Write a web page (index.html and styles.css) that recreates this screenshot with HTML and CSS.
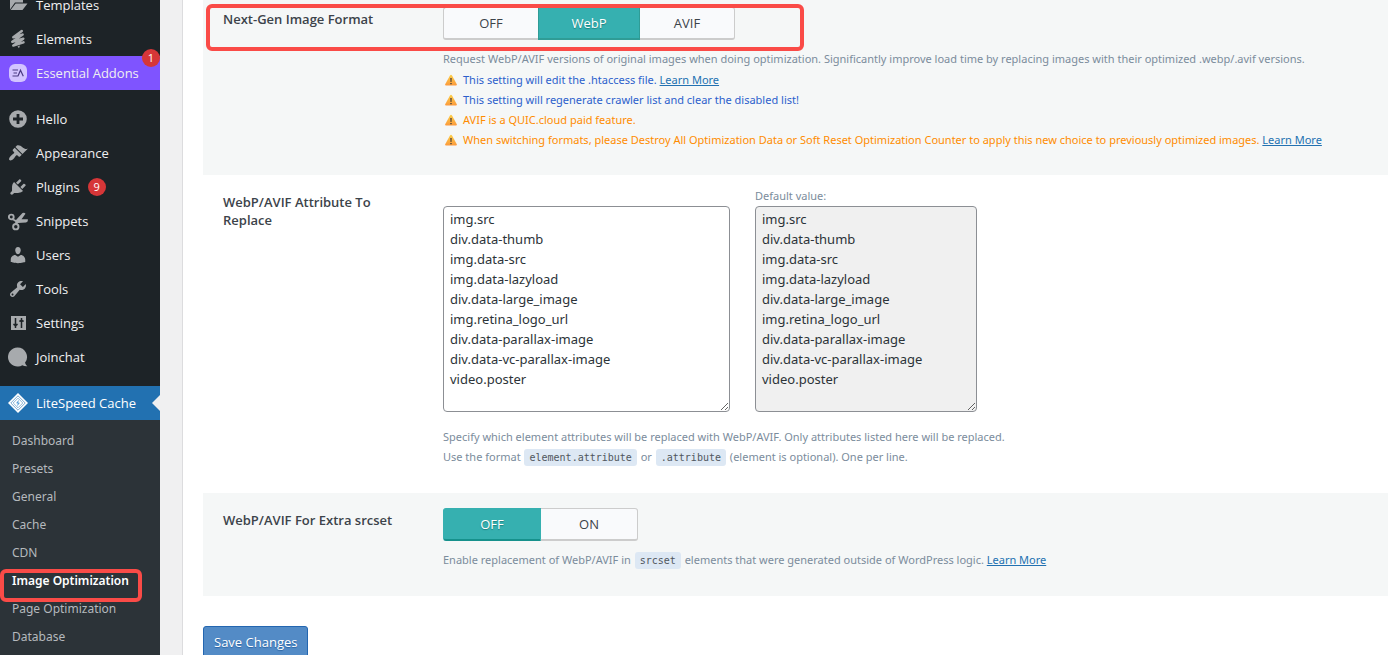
FILE: index.html
```html
<!DOCTYPE html>
<html lang="en">
<head>
<meta charset="utf-8">
<meta name="viewport" content="width=device-width, initial-scale=1">
<title>LiteSpeed Cache - Image Optimization</title>
<link rel="stylesheet" href="styles.css">
</head>
<body>
<svg class="defs" aria-hidden="true">
  <defs>
    <linearGradient id="amber" x1="0" y1="0" x2="0" y2="1"><stop offset="0" stop-color="#fccf49"/><stop offset="1" stop-color="#fb9a3d"/></linearGradient>
    <symbol id="warn" viewBox="0 0 12 12">
      <path d="M5.1 1.2Q6 .2 6.900 1.2L11.800 10.2Q12 11.4 11 11.5H1Q0 11.4.2 10.2Z" fill="url(#amber)"/>
      <path d="M5.300 4h1.400L6.500 8h-1zM5.300 8.900h1.400v1.300H5.300z" fill="#4a4038"/>
    </symbol>
  </defs>
</svg>
<div class="layout">
  <nav class="sidebar" aria-label="Admin menu">
    <ul class="menu">
      <li><a class="item" href="#"><svg class="icon" viewBox="0 0 20 20"><path d="M2 3h5l1.500 2H15v2.500H7L2 14.500zM7.600 8.500H19.500L14.500 15H2.600z"/></svg>Templates</a></li>
      <li><a class="item" href="#"><svg class="icon" viewBox="0 0 20 20"><path d="M13.800 2 5.300 8.300 14.600 5.600 4.300 12.800 15.300 9.700 5.300 16.600 15.500 13.400" fill="none" stroke="currentColor" stroke-width="2.500" stroke-linecap="round" stroke-linejoin="round"/><path d="M9.500 17.500 12 16.600 11 19.200z"/></svg>Elements</a></li>
      <li><a class="item item--promo" href="#"><svg class="icon" viewBox="0 0 20 20"><rect x="1" y="1" width="18" height="18" rx="6" fill="#d3c4ff"/><path d="M4.500 7h5.500M5.500 10h3.500M4.500 13h5.500L12.500 7.200 15.300 13.300" fill="none" stroke="#4a3a82" stroke-width="1.200"/></svg>Essential Addons<span class="badge badge--corner">1</span></a></li>
    </ul>
    <ul class="menu">
      <li><a class="item" href="#"><svg class="icon" viewBox="0 0 20 20"><path fill-rule="evenodd" d="M10 1.200a8.800 8.800 0 1 0 0 17.600 8.800 8.800 0 0 0 0-17.600zM8.600 5h2.800v3.600H15v2.800h-3.600V15H8.600v-3.600H5V8.600h3.600z"/></svg>Hello</a></li>
      <li><a class="item" href="#"><svg class="icon" viewBox="0 0 20 20"><path d="M14.480 11.060L7.410 3.990l1.500-1.500c.5-.56 2.300-.47 3.510.32 1.210.8 1.430 1.280 2.910 2.100 1.180.64 2.450 1.260 4.450.85zm-.71.71L6.700 4.700 4.930 6.470c-.39.39-.39 1.020 0 1.410l1.060 1.060c.39.39.39 1.030 0 1.420-.6.6-1.430 1.110-2.210 1.690-.35.26-.7.53-1.010.84C1.430 14.230.4 16.080 1.400 17.070c.99 1 2.840-.03 4.180-1.360.31-.31.58-.66.85-1.020.57-.78 1.080-1.610 1.690-2.210.39-.39 1.020-.39 1.410 0l1.060 1.060c.39.39 1.020.39 1.410 0z"/></svg>Appearance</a></li>
      <li><a class="item" href="#"><svg class="icon" viewBox="0 0 20 20"><path d="M13.110 4.360L9.870 7.600 8 5.730l3.240-3.240c.35-.34 1.050-.2 1.560.32.52.51.66 1.210.31 1.550zm-8 1.770l.91-1.120 9.010 9.010-1.190.84c-.71.71-2.630 1.160-3.820 1.160H6.140L4.900 17.260c-.59.59-1.540.59-2.120 0-.59-.58-.59-1.530 0-2.120l1.240-1.240v-3.880c0-1.130.4-3.190 1.090-3.890zm7.260 3.970l3.240-3.240c.34-.35 1.040-.21 1.550.31.52.51.66 1.210.31 1.550l-3.240 3.250z"/></svg>Plugins<span class="badge">9</span></a></li>
      <li><a class="item" href="#"><svg class="icon" viewBox="0 0 20 20"><path d="M5 7.500 8 9 14.500 2q2-1 3 .800L13.500 8.300h6.300q.5 2.500-1.800 3.200l-8 .500-1.500 2-1.800-1.500.800-1.500L3.800 8.500z"/><g fill="none" stroke="currentColor" stroke-width="1.900"><circle cx="3.300" cy="6" r="2.400"/><circle cx="7.800" cy="15.700" r="2.700"/></g></svg>Snippets</a></li>
      <li><a class="item" href="#"><svg class="icon" viewBox="0 0 20 20"><path d="M10 9.250c-2.270 0-2.730-3.440-2.730-3.440C7 4.020 7.820 2 9.970 2c2.160 0 2.980 2.020 2.710 3.810 0 0-.41 3.440-2.680 3.440zm0 2.570L12.720 10c2.390 0 4.520 2.330 4.520 4.530v2.490s-3.650 1.130-7.240 1.130c-3.650 0-7.240-1.130-7.240-1.130v-2.490c0-2.250 1.940-4.480 4.470-4.480z"/></svg>Users</a></li>
      <li><a class="item" href="#"><svg class="icon" viewBox="0 0 20 20"><path d="M16.680 9.770c-1.340 1.340-3.300 1.670-4.950.99l-5.410 6.520c-.99.99-2.590.99-3.580 0s-.99-2.590 0-3.570l6.520-5.420c-.68-1.650-.35-3.610.99-4.950 1.280-1.280 3.120-1.620 4.720-1.060l-2.890 2.890 2.820 2.820 2.860-2.870c.53 1.580.18 3.390-1.080 4.650zM3.810 16.210c.4.39 1.040.39 1.430 0 .4-.4.4-1.040 0-1.430-.39-.4-1.030-.4-1.430 0-.39.39-.39 1.030 0 1.430z"/></svg>Tools</a></li>
      <li><a class="item" href="#"><svg class="icon" viewBox="0 0 20 20"><path d="M3 3h15v14H3z"/><path d="M7.500 5v10M5.300 11.500h4.400M13.500 5v10M11.300 8h4.400" fill="none" stroke="#1d2327" stroke-width="1.500"/><path d="M5.500 11.500h4l-2 2.500zM11.500 8.500h4l-2-2.500z" fill="#1d2327"/></svg>Settings</a></li>
      <li><a class="item" href="#"><svg class="icon" viewBox="0 0 20 20"><path d="M9.500.500a9.500 9.500 0 1 0 4.800 17.700q2 1.300 5 1.100-1.600-1.300-2.300-3.500A9.500 9.500 0 0 0 9.500.500z"/></svg>Joinchat</a></li>
    </ul>
    <ul class="menu">
      <li>
        <a class="item item--current" href="#"><svg class="icon" viewBox="0 0 20 20"><path d="M10 0 20 10 10 20 0 10z" fill="#fff"/><g fill="none" stroke="#2271b1"><path d="M10 2.800 17.200 10 10 17.200 2.800 10z" stroke-width=".6"/><path d="M10 5.200 14.800 10 10 14.800 5.200 10z" stroke-width=".5"/></g><path d="M10.800 6.800 8 10.300h1.700L9.200 13.200 12 9.700h-1.700z" fill="#5aa0d8"/></svg>LiteSpeed Cache</a>
        <ul class="submenu">
          <li><a class="subitem" href="#">Dashboard</a></li>
          <li><a class="subitem" href="#">Presets</a></li>
          <li><a class="subitem" href="#">General</a></li>
          <li><a class="subitem" href="#">Cache</a></li>
          <li><a class="subitem" href="#">CDN</a></li>
          <li><a class="subitem subitem--current" href="#" aria-current="page">Image Optimization</a></li>
          <li><a class="subitem" href="#">Page Optimization</a></li>
          <li><a class="subitem" href="#">Database</a></li>
        </ul>
      </li>
    </ul>
  </nav>

  <main class="content">
    <form class="panel">
      <section class="setting setting--shaded setting--notices setting--marked">
        <h2 class="setting-title" id="format-title">Next-Gen Image Format</h2>
        <div>
          <div class="switch switch--three" role="radiogroup" aria-labelledby="format-title">
            <input type="radio" name="format" id="format-off"><label class="choice" for="format-off">OFF</label>
            <input type="radio" name="format" id="format-webp" checked><label class="choice choice--middle" for="format-webp">WebP</label>
            <input type="radio" name="format" id="format-avif"><label class="choice" for="format-avif">AVIF</label>
          </div>
          <p class="desc">Request WebP/AVIF versions of original images when doing optimization. Significantly improve load time by replacing images with their optimized .webp/.avif versions.</p>
          <ul class="notices">
            <li class="notice"><svg class="warn"><use href="#warn"/></svg><span>This setting will edit the .htaccess file. <a class="link" href="#">Learn More</a></span></li>
            <li class="notice"><svg class="warn"><use href="#warn"/></svg><span>This setting will regenerate crawler list and clear the disabled list!</span></li>
            <li class="notice notice--orange"><svg class="warn"><use href="#warn"/></svg><span>AVIF is a QUIC.cloud paid feature.</span></li>
            <li class="notice notice--orange"><svg class="warn"><use href="#warn"/></svg><span>When switching formats, please Destroy All Optimization Data or Soft Reset Optimization Counter to apply this new choice to previously optimized images. <a class="link" href="#">Learn More</a></span></li>
          </ul>
        </div>
      </section>

      <section class="setting">
        <h2 class="setting-title"><label for="attrs">WebP/AVIF Attribute To Replace</label></h2>
        <div>
          <div class="fields">
            <textarea class="area" id="attrs">img.src
div.data-thumb
img.data-src
img.data-lazyload
div.data-large_image
img.retina_logo_url
div.data-parallax-image
div.data-vc-parallax-image
video.poster</textarea>
            <div class="default">
              <label class="default-label" for="defaults">Default value:</label>
              <textarea class="area area--readonly" id="defaults" readonly>img.src
div.data-thumb
img.data-src
img.data-lazyload
div.data-large_image
img.retina_logo_url
div.data-parallax-image
div.data-vc-parallax-image
video.poster</textarea>
            </div>
          </div>
          <p class="desc desc--spaced">Specify which element attributes will be replaced with WebP/AVIF. Only attributes listed here will be replaced.<br>Use the format <code class="code">element.attribute</code> or <code class="code">.attribute</code> (element is optional). One per line.</p>
        </div>
      </section>

      <section class="setting setting--shaded">
        <h2 class="setting-title" id="srcset-title">WebP/AVIF For Extra srcset</h2>
        <div>
          <div class="switch" role="radiogroup" aria-labelledby="srcset-title">
            <input type="radio" name="srcset" id="srcset-off" checked><label class="choice" for="srcset-off">OFF</label>
            <input type="radio" name="srcset" id="srcset-on"><label class="choice" for="srcset-on">ON</label>
          </div>
          <p class="desc">Enable replacement of WebP/AVIF in <code class="code">srcset</code> elements that were generated outside of WordPress logic. <a class="link" href="#">Learn More</a></p>
        </div>
      </section>

      <button class="save" type="submit">Save Changes</button>
    </form>
  </main>
</div>
</body>
</html>
```
FILE: styles.css
```css
*,
*::before,
*::after {
  box-sizing: border-box;
}

body {
  margin: 0;
  height: 100vh;
  overflow: hidden;
  background: #f0f0f1;
  color: #3c434a;
  font: 13px/20px "Open Sans", "Noto Sans", sans-serif;
}

ul, p, h2 {
  margin: 0;
  padding: 0;
}

ul {
  list-style: none;
}

.defs {
  position: absolute;
  width: 0;
  height: 0;
}

.layout {
  display: flex;
  min-height: 100vh;
}

/* Sidebar */
.sidebar {
  flex: none;
  display: flex;
  flex-direction: column;
  gap: 12px;
  width: 160px;
  margin-top: -12px;
  background: #1d2327;
}

.item {
  position: relative;
  display: flex;
  align-items: center;
  gap: 8px;
  height: 34px;
  padding-left: 8px;
  color: #f0f0f1;
  text-decoration: none;
  white-space: nowrap;
}

.icon {
  flex: none;
  width: 20px;
  height: 20px;
  color: #a7aaad;
  fill: currentColor;
}

.item--promo {
  background: #7f54ff;
}

.item--current {
  background: #2271b1;
  color: #fff;
}

.item--current::after {
  content: "";
  position: absolute;
  right: 0;
  top: 9px;
  border: 8px solid transparent;
  border-left-width: 0;
  border-right-color: #f0f0f1;
}

.badge {
  width: 18px;
  height: 18px;
  border-radius: 9px;
  background: #d63638;
  color: #fff;
  font-size: 11px;
  line-height: 18px;
  text-align: center;
}

.badge--corner {
  position: absolute;
  right: 0;
  top: -7px;
}

.submenu {
  padding: 7px 0;
  background: #2c3338;
}

.subitem {
  position: relative;
  display: block;
  padding: 0 12px;
  color: #b5b9bd;
  font-family: "Noto Sans", "Open Sans", sans-serif;
  font-size: 12px;
  line-height: 28px;
  text-decoration: none;
}

.subitem--current {
  color: #fff;
  font-weight: 600;
}

.subitem--current::after {
  content: "";
  position: absolute;
  inset: 2px 18px -7px 0;
  z-index: 1;
  border: 4px solid #fa4b47;
  border-radius: 6px;
}

/* Settings */
.content {
  flex: 1;
  min-width: 0;
  padding-left: 22px;
}

.panel {
  min-height: 100%;
  padding-left: 20px;
  border-left: 1px solid #dcdcde;
  background: #fff;
}

.setting {
  position: relative;
  display: grid;
  grid-template-columns: 220px minmax(0, 1fr);
  padding: 15px 20px 26px;
}

.setting--shaded {
  background: #f5f7f7;
}

.setting--notices {
  margin-top: -8px;
  padding-bottom: 25px;
}

.setting--marked::after {
  content: "";
  position: absolute;
  left: 3px;
  top: 12px;
  width: 598px;
  height: 47px;
  border: 4px solid #fa4b47;
  border-radius: 6px;
  pointer-events: none;
}

.setting-title {
  padding: 3px 40px 0 0;
  font-size: 13px;
  font-weight: 600;
  line-height: 18px;
}

.switch {
  display: flex;
}

.switch input {
  position: absolute;
  opacity: 0;
}

.choice {
  width: 97px;
  height: 33px;
  border: 1px solid #ccc;
  border-bottom-width: 2px;
  border-left-width: 0;
  background: #f9fafc;
  line-height: 30px;
  text-align: center;
}

.choice:first-of-type {
  width: 98px;
  border-left-width: 1px;
  border-radius: 3px 0 0 3px;
}

.choice:last-of-type {
  border-radius: 0 3px 3px 0;
}

.switch--three .choice {
  width: 95px;
}

.switch--three .choice:first-of-type {
  border-right-width: 0;
}

.switch--three .choice--middle {
  width: 102px;
}

.switch input:checked + .choice {
  border-color: #36b0b0;
  border-bottom-color: #16918c;
  background: #36b0b0;
  color: #fff;
  text-shadow: 0 1px 1px #1d7f7f;
}

.switch input:checked + .choice--middle {
  border-left-width: 1px;
  border-color: #2f9c96;
}

.desc {
  margin-top: 9px;
  color: #7b8c9c;
  font-family: "Noto Sans", "Open Sans", sans-serif;
  font-size: 11px;
}

.desc--spaced {
  margin-top: 15px;
}

.notices {
  margin-top: 1px;
  color: #2c5fcc;
  font-family: "Noto Sans", "Open Sans", sans-serif;
  font-size: 11px;
}

.notice {
  display: flex;
  align-items: center;
  gap: 6px;
  padding-left: 2px;
}

.notice--orange {
  color: #ff8c00;
}

.warn {
  flex: none;
  width: 12px;
  height: 12px;
}

.link {
  color: #2271b1;
}

.fields {
  display: flex;
  align-items: flex-end;
  gap: 25px;
}

.default {
  display: flex;
  flex-direction: column;
}

.default-label {
  margin-top: -4px;
  color: #7b8c9c;
  font-family: "Noto Sans", "Open Sans", sans-serif;
  font-size: 11px;
}

.area {
  width: 287px;
  height: 206px;
  padding: 2px 6px;
  border: 1px solid #8c8f94;
  border-radius: 4px;
  background: #fff;
  color: #2c3338;
  font: 13px/20px "Noto Sans", "Open Sans", sans-serif;
  resize: both;
}

.area--readonly {
  width: 222px;
  background: #f0f0f0;
}

.code {
  margin: 0 1px;
  padding: 3px 5px;
  border-radius: 3px;
  background: #dde8f4;
  color: #50575e;
  font: 10px "DejaVu Sans Mono", monospace;
}

.save {
  display: block;
  height: 32px;
  margin-top: 30px;
  padding: 0 10px;
  border: 1px solid #2366b0;
  border-radius: 3px;
  background: #538bc6;
  color: #fff;
  font: inherit;
  text-shadow: 0 1px 1px #2a62a0;
}
```
